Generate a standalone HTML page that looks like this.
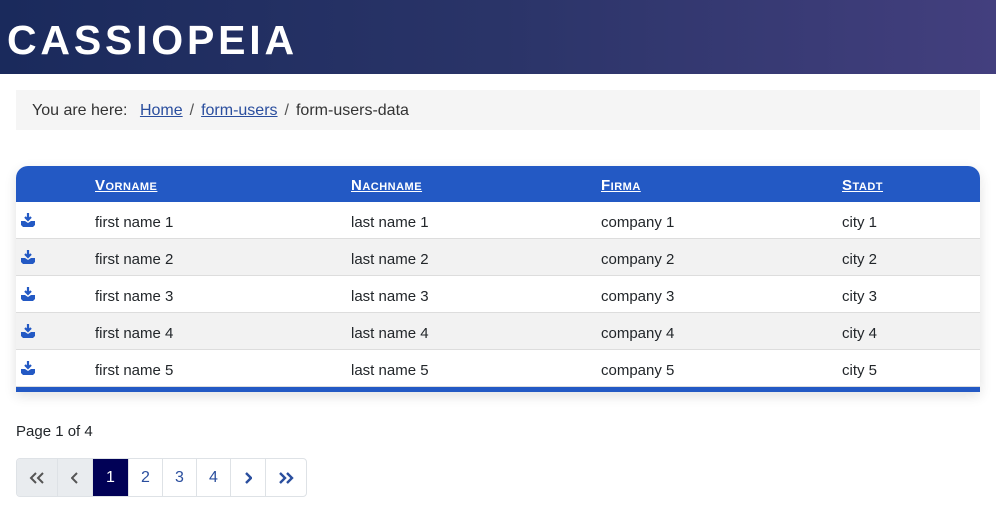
<!DOCTYPE html><html><head><style>
body{margin:0;width:996px;height:526px;background:#fff;font-family:"Liberation Sans",sans-serif;color:#22262a;position:relative;overflow:hidden}
.hd{position:absolute;left:0;top:0;width:996px;height:74px;background:linear-gradient(90deg,#1a2a5c 0%,#2a3468 50%,#433f7e 100%)}
.hd span{position:absolute;left:7px;top:17px;color:#fff;font-weight:bold;font-size:41px;letter-spacing:3.8px}
.bc{position:absolute;left:16px;top:90px;width:964px;height:40px;background:#f5f5f5;font-size:16px;line-height:42px;box-sizing:border-box;padding-left:16px;color:#333}
.bc a{color:#2a4e9e;text-decoration:underline}
.bc i{font-style:normal;margin:0 7px;color:#555}
.tb{position:absolute;left:16px;top:166px;width:964px;height:226px;box-shadow:0 4px 12px rgba(0,0,0,.12);border-radius:12px 12px 0 0;background:#fff}
.th{height:36px;background:#2359c4;border-radius:12px 12px 0 0;position:relative}
.th span{position:absolute;top:11px;color:#fff;font-weight:bold;text-decoration:underline;font-variant:small-caps;letter-spacing:.5px;font-size:15px}
.r{height:36px;border-bottom:1px solid #ddd;position:relative;font-size:15px}
.r.g{background:#f2f2f2}
.r span{position:absolute;top:12px}
.bl{position:absolute;left:0;bottom:0;width:964px;height:5px;background:#2359c4}
.pg{position:absolute;left:16px;top:458px;display:flex;border:1px solid #dee2e6;border-radius:4px;overflow:hidden;height:37px}
.pg div{border-left:1px solid #dee2e6;display:flex;align-items:center;justify-content:center;color:#2a4e9e;font-size:16px}
.pg div:first-child{border-left:none}
</style></head><body>
<div class="hd"><span>CASSIOPEIA</span></div>
<div class="bc">You are here: <a style="margin-left:8px">Home</a><i>/</i><a>form-users</a><i>/</i>form-users-data</div>
<div class="tb">
<div class="th"><span style="left:79px">Vorname</span><span style="left:335px">Nachname</span><span style="left:585px">Firma</span><span style="left:826px">Stadt</span></div>
<script>
for(let i=1;i<=5;i++){document.write(`<div class="r ${i%2==0?'g':''}"><svg style="position:absolute;left:4px;top:11px" width="16" height="14" viewBox="0 0 16 14"><path d="M8 0v6M5 4l3 3 3-3" stroke="#2359c4" stroke-width="2.2" fill="none"/><path d="M1 8h4l3 2 3-2h4v4l-2 2H3l-2-2z" fill="#2359c4"/></svg><span style="left:79px">first name ${i}</span><span style="left:335px">last name ${i}</span><span style="left:585px">company ${i}</span><span style="left:826px">city ${i}</span></div>`)}
</script>
<div class="bl"></div></div>
<div style="position:absolute;left:16px;top:423px;font-size:15px">Page 1 of 4</div>
<div class="pg">
<div style="width:40px;background:#e9ecef"><svg width="16" height="12" viewBox="0 0 16 12"><path d="M7 1L2 6l5 5M14 1L9 6l5 5" stroke="#555" stroke-width="2" fill="none"/></svg></div>
<div style="width:34px;background:#e9ecef"><svg width="8" height="12" viewBox="0 0 8 12"><path d="M6 1L1 6l5 5" stroke="#555" stroke-width="2" fill="none"/></svg></div>
<div style="width:35px;background:#010156;color:#fff">1</div>
<div style="width:33px">2</div><div style="width:33px">3</div><div style="width:33px">4</div>
<div style="width:34px"><svg width="8" height="12" viewBox="0 0 8 12"><path d="M2 1l5 5-5 5" stroke="#2a4e9e" stroke-width="2.4" fill="none"/></svg></div>
<div style="width:40px"><svg width="16" height="12" viewBox="0 0 16 12"><path d="M2 1l5 5-5 5M9 1l5 5-5 5" stroke="#2a4e9e" stroke-width="2.4" fill="none"/></svg></div>
</div>
</body></html>
